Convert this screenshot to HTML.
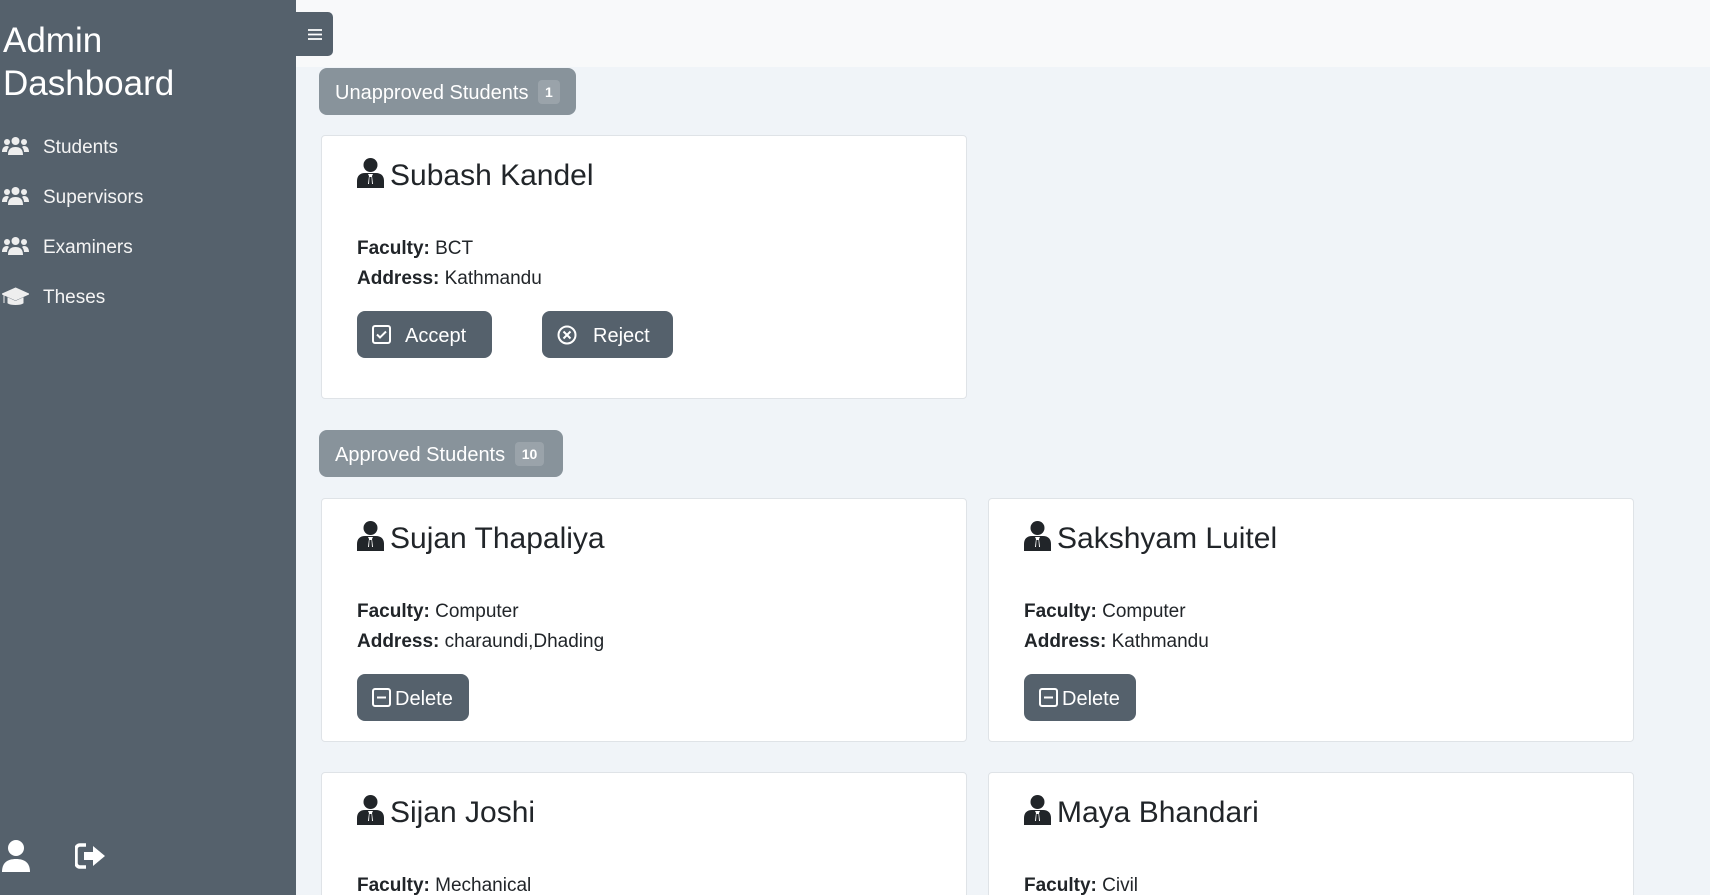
<!DOCTYPE html>
<html style="overflow:hidden;height:895px"><head><meta charset="utf-8"><style>
*{box-sizing:border-box;margin:0;padding:0}
body{width:1710px;height:895px;overflow:hidden;background:#f0f4f8;font-family:"Liberation Sans",sans-serif;color:#212529;position:relative}
.side{position:absolute;left:0;top:0;width:296px;height:895px;background:#55616c;color:#fff}
.side h1{position:absolute;left:3px;top:19px;font-size:35px;line-height:43px;font-weight:normal}
.nav{position:absolute;left:0;font-size:19px;color:#f4f4f4}
.nav svg{position:absolute;left:2px;top:-11px}
.nav span{position:absolute;left:43px;top:-10px;white-space:nowrap}
.top{position:absolute;left:296px;top:0;width:1414px;height:67px;background:#f8f9fa}
.tog{position:absolute;left:296px;top:12px;width:37px;height:44px;background:#55616c;border-radius:0 5px 5px 0}
.badge{position:absolute;left:319px;height:47px;background:#88939b;color:#fff;border-radius:8px;font-size:20px;line-height:50px;padding-left:16px}
.badge b{display:inline-block;background:#9aa3aa;border-radius:4px;font-size:14px;line-height:24px;padding:0 7px;margin-left:4px;vertical-align:2px}
.card{position:absolute;width:646px;background:#fff;border:1px solid #dfe3e7;border-radius:4px}
.card .t{position:absolute;left:35px;top:22px;font-size:30px;white-space:nowrap}
.card .t svg{vertical-align:-3px;margin-right:6px}
.card .f{position:absolute;left:35px;font-size:19px;white-space:nowrap}
.btn{position:absolute;height:47px;background:#55616c;color:#fff;border-radius:8px;font-size:20px;line-height:51px}
.btn svg{position:absolute;top:14px}
</style></head><body>
<div class="side">
<h1>Admin<br>Dashboard</h1>
<div class="nav" style="top:147px"><svg width="27" height="20" viewBox="0 0 27 20"><circle cx="13.5" cy="5" r="4" fill="#eee"/><circle cx="5" cy="6" r="3" fill="#eee"/><circle cx="22" cy="6" r="3" fill="#eee"/><path d="M6 19c0-6 3-8 7.5-8S21 13 21 19z M0 16c0-4 2-6 5-6 1 0 2 1 2 1-1 1-2 3-2 5z M27 16c0-4-2-6-5-6-1 0-2 1-2 1 1 1 2 3 2 5z" fill="#eee"/></svg><span>Students</span></div>
<div class="nav" style="top:197px"><svg width="27" height="20" viewBox="0 0 27 20"><circle cx="13.5" cy="5" r="4" fill="#eee"/><circle cx="5" cy="6" r="3" fill="#eee"/><circle cx="22" cy="6" r="3" fill="#eee"/><path d="M6 19c0-6 3-8 7.5-8S21 13 21 19z M0 16c0-4 2-6 5-6 1 0 2 1 2 1-1 1-2 3-2 5z M27 16c0-4-2-6-5-6-1 0-2 1-2 1 1 1 2 3 2 5z" fill="#eee"/></svg><span>Supervisors</span></div>
<div class="nav" style="top:247px"><svg width="27" height="20" viewBox="0 0 27 20"><circle cx="13.5" cy="5" r="4" fill="#eee"/><circle cx="5" cy="6" r="3" fill="#eee"/><circle cx="22" cy="6" r="3" fill="#eee"/><path d="M6 19c0-6 3-8 7.5-8S21 13 21 19z M0 16c0-4 2-6 5-6 1 0 2 1 2 1-1 1-2 3-2 5z M27 16c0-4-2-6-5-6-1 0-2 1-2 1 1 1 2 3 2 5z" fill="#eee"/></svg><span>Examiners</span></div>
<div class="nav" style="top:297px"><svg width="27" height="20" viewBox="0 0 27 20"><path d="M13.5 2 27 8l-13.5 6L0 8z M6 12v5c3 2 12 2 15 0v-5l-7.5 3.5z M2 9v8" fill="#eee" stroke="#eee" stroke-width="1"/></svg><span>Theses</span></div>
<svg style="position:absolute;left:2px;top:840px" width="28" height="32" viewBox="0 0 28 32"><circle cx="14" cy="8" r="8" fill="#fff"/><path d="M0 32c0-9 5-13 14-13s14 4 14 13z" fill="#fff"/></svg>
<svg style="position:absolute;left:75px;top:843px" width="32" height="26" viewBox="0 0 32 26"><path d="M11 2H5a4 4 0 0 0-4 4v14a4 4 0 0 0 4 4h6" fill="none" stroke="#fff" stroke-width="3.5"/><path d="M9 9h9V3l12 10-12 10v-6H9z" fill="#fff"/></svg>
</div>
<div class="top"></div>
<div class="tog"><svg style="position:absolute;left:12px;top:17px" width="14" height="11"><path d="M0 1h14M0 5.5h14M0 10h14" stroke="#fff" stroke-width="1.8"/></svg></div>

<div class="badge" style="top:68px;width:257px">Unapproved Students <b>1</b></div>
<div class="card" style="left:321px;top:135px;height:264px">
<div class="t"><svg width="27" height="30" viewBox="0 0 27 30"><circle cx="13.5" cy="7" r="7" fill="#212529"/><path d="M0 30v-7c0-5 3-8 8-8h11c5 0 8 3 8 8v7z" fill="#212529"/><path d="M11 16h5l-1 2 1 8h-5l1-8z" fill="#fff"/><path d="M12.5 19h2l.5 7h-3z" fill="#212529"/></svg>Subash Kandel</div>
<div class="f" style="top:102px"><b>Faculty:</b> BCT</div>
<div class="f" style="top:132px"><b>Address:</b> Kathmandu</div>
<div class="btn" style="left:35px;top:175px;width:135px"><svg style="left:15px" width="19" height="19" viewBox="0 0 19 19"><rect x="1" y="1" width="17" height="17" rx="2" fill="none" stroke="#fff" stroke-width="2"/><path d="M5 9.5l3 3 6-6" fill="none" stroke="#fff" stroke-width="2"/></svg><span style="position:absolute;left:48px">Accept</span></div>
<div class="btn" style="left:220px;top:175px;width:131px"><svg style="left:15px" width="20" height="20" viewBox="0 0 20 20"><circle cx="10" cy="10" r="8.5" fill="none" stroke="#fff" stroke-width="2"/><path d="M6.5 6.5l7 7M13.5 6.5l-7 7" stroke="#fff" stroke-width="2"/></svg><span style="position:absolute;left:51px">Reject</span></div>
</div>

<div class="badge" style="top:430px;width:244px">Approved Students <b>10</b></div>

<div class="card" style="left:321px;top:498px;height:244px">
<div class="t"><svg width="27" height="30" viewBox="0 0 27 30"><circle cx="13.5" cy="7" r="7" fill="#212529"/><path d="M0 30v-7c0-5 3-8 8-8h11c5 0 8 3 8 8v7z" fill="#212529"/><path d="M11 16h5l-1 2 1 8h-5l1-8z" fill="#fff"/><path d="M12.5 19h2l.5 7h-3z" fill="#212529"/></svg>Sujan Thapaliya</div>
<div class="f" style="top:102px"><b>Faculty:</b> Computer</div>
<div class="f" style="top:132px"><b>Address:</b> charaundi,Dhading</div>
<div class="btn" style="left:35px;top:175px;width:112px"><svg style="left:15px" width="19" height="19" viewBox="0 0 19 19"><rect x="1" y="1" width="17" height="17" rx="2" fill="none" stroke="#fff" stroke-width="2"/><path d="M5 9.5h9" stroke="#fff" stroke-width="2"/></svg><span style="position:absolute;left:38px">Delete</span></div>
</div>
<div class="card" style="left:988px;top:498px;height:244px">
<div class="t"><svg width="27" height="30" viewBox="0 0 27 30"><circle cx="13.5" cy="7" r="7" fill="#212529"/><path d="M0 30v-7c0-5 3-8 8-8h11c5 0 8 3 8 8v7z" fill="#212529"/><path d="M11 16h5l-1 2 1 8h-5l1-8z" fill="#fff"/><path d="M12.5 19h2l.5 7h-3z" fill="#212529"/></svg>Sakshyam Luitel</div>
<div class="f" style="top:102px"><b>Faculty:</b> Computer</div>
<div class="f" style="top:132px"><b>Address:</b> Kathmandu</div>
<div class="btn" style="left:35px;top:175px;width:112px"><svg style="left:15px" width="19" height="19" viewBox="0 0 19 19"><rect x="1" y="1" width="17" height="17" rx="2" fill="none" stroke="#fff" stroke-width="2"/><path d="M5 9.5h9" stroke="#fff" stroke-width="2"/></svg><span style="position:absolute;left:38px">Delete</span></div>
</div>
<div class="card" style="left:321px;top:772px;height:140px">
<div class="t"><svg width="27" height="30" viewBox="0 0 27 30"><circle cx="13.5" cy="7" r="7" fill="#212529"/><path d="M0 30v-7c0-5 3-8 8-8h11c5 0 8 3 8 8v7z" fill="#212529"/><path d="M11 16h5l-1 2 1 8h-5l1-8z" fill="#fff"/><path d="M12.5 19h2l.5 7h-3z" fill="#212529"/></svg>Sijan Joshi</div>
<div class="f" style="top:102px"><b>Faculty:</b> Mechanical</div>
</div>
<div class="card" style="left:988px;top:772px;height:140px">
<div class="t"><svg width="27" height="30" viewBox="0 0 27 30"><circle cx="13.5" cy="7" r="7" fill="#212529"/><path d="M0 30v-7c0-5 3-8 8-8h11c5 0 8 3 8 8v7z" fill="#212529"/><path d="M11 16h5l-1 2 1 8h-5l1-8z" fill="#fff"/><path d="M12.5 19h2l.5 7h-3z" fill="#212529"/></svg>Maya Bhandari</div>
<div class="f" style="top:102px"><b>Faculty:</b> Civil</div>
</div>
</body></html>
